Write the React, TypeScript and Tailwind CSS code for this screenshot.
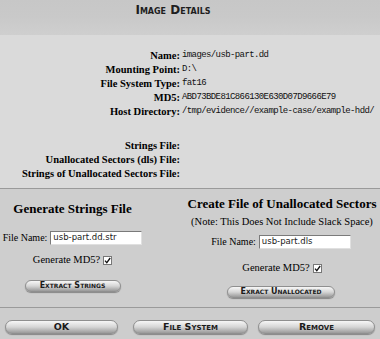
import React from "react";

const serif = "font-['Liberation_Serif','Times_New_Roman',serif]";
const mono = "font-['Liberation_Mono','Courier_New',monospace]";
const sans = "font-['DejaVu_Sans','Liberation_Sans',sans-serif]";

const details: [string, string][] = [
  ["Name:", "images/usb-part.dd"],
  ["Mounting Point:", "D:\\"],
  ["File System Type:", "fat16"],
  ["MD5:", "ABD73BDE81C866130E630D07D9666E79"],
  ["Host Directory:", "/tmp/evidence//example-case/example-hdd/"],
];

const files = ["Strings File:", "Unallocated Sectors (dls) File:", "Strings of Unallocated Sectors File:"];

const PillButton = ({ label, className }: { label: string; className: string }) => (
  <button
    className={`${className} ${sans} rounded-full border border-[#8f8f8f] bg-gradient-to-b from-[#f7f7f7] via-[#d6d6d6] to-[#9a9a9a] text-[#1a1a1a] font-bold [font-variant:small-caps] leading-none shadow-[0_1px_1px_rgba(0,0,0,0.35)] flex items-center justify-center`}
  >
    {label}
  </button>
);

const Row = ({ label, value }: { label: string; value?: string }) => (
  <div className="grid grid-cols-[181px_1fr] h-[14px] items-center">
    <span className={`${serif} font-bold text-[10.5px] text-right text-black pr-[1px]`}>{label}</span>
    <span className={`${mono} text-[9px] tracking-[-0.6px] whitespace-nowrap text-[#111] pl-[1px]`}>{value}</span>
  </div>
);

const TextBox = ({ value, width }: { value: string; width: string }) => (
  <div
    className={`${width} h-[14px] bg-white border border-t-[#7a7a7a] border-l-[#7a7a7a] border-r-[#e0e0e0] border-b-[#e0e0e0] ${sans} text-[8.5px] text-[#222] pl-[2px] flex items-center`}
  >
    {value}
  </div>
);

const Check = () => (
  <span className="w-[9px] h-[9px] bg-white border border-[#777] inline-flex items-center justify-center">
    <svg width="7" height="7" viewBox="0 0 7 7">
      <path d="M1 3.6 L2.8 5.6 L6.2 1" stroke="#111" strokeWidth="1.3" fill="none" />
    </svg>
  </span>
);

export default function App() {
  return (
    <div className="w-[380px] h-[339px] overflow-hidden bg-[#d9d9d9] flex flex-col">
      <div className="h-[35px] bg-gradient-to-b from-[#c7c7c7] via-[#c9c9c9] to-[#cfcfcf] flex justify-center">
        <h1 className={`${sans} font-bold text-[12px] [font-variant:small-caps] text-[#1e1e1e] mt-[1px] mr-[34px]`}>
          Image Details
        </h1>
      </div>

      <div className="h-[153px] pt-[13px] bg-[#dadada]">
        {details.map(([l, v]) => (
          <Row key={l} label={l} value={v} />
        ))}
        <div className="mt-[20px]">
          {files.map((l) => (
            <Row key={l} label={l} />
          ))}
        </div>
      </div>

      <div className="h-[1px] bg-[#9a9a9a]" />

      <div className={`h-[118px] bg-[#cecece] flex ${serif} text-black`}>
        <div className="w-[145px] flex flex-col items-center pt-[12px]">
          <h2 className="font-bold text-[13px] leading-[16px]">Generate Strings File</h2>
          <div className="mt-[13px] flex items-center gap-[3px] text-[10px]">
            <span>File Name:</span>
            <TextBox value="usb-part.dd.str" width="w-[92px]" />
          </div>
          <div className="mt-[9px] h-[12px] flex items-center gap-[3px] text-[10.5px]">
            <span>Generate MD5?</span>
            <Check />
          </div>
          <PillButton label="Extract Strings" className="mt-[14px] w-[96px] h-[12px] text-[8px]" />
        </div>
        <div className="ml-auto w-[196px] flex flex-col items-center pt-[7px]">
          <h2 className="font-bold text-[13px] leading-[16px] whitespace-nowrap">Create File of Unallocated Sectors</h2>
          <div className="mt-[4px] h-[12px] text-[10.5px] font-normal leading-[12px] whitespace-nowrap">
            (Note: This Does Not Include Slack Space)
          </div>
          <div className="mt-[6px] flex items-center gap-[3px] text-[10px] mr-[2px]">
            <span>File Name:</span>
            <TextBox value="usb-part.dls" width="w-[92px]" />
          </div>
          <div className="mt-[13px] h-[12px] flex items-center gap-[3px] text-[10.5px]">
            <span>Generate MD5?</span>
            <Check />
          </div>
          <PillButton label="Exract Unallocated" className="mt-[12px] w-[108px] h-[12px] text-[8px] mr-[2px]" />
        </div>
      </div>

      <div className="h-[1px] bg-[#9a9a9a]" />

      <div className="flex-1 bg-[#cdcdcd] flex items-start pt-[12px] pl-[5px]">
        <PillButton label="OK" className="w-[113px] h-[14px] text-[9.5px]" />
        <PillButton label="File System" className="ml-[15px] w-[115px] h-[14px] text-[9.5px]" />
        <PillButton label="Remove" className="ml-[10px] w-[117px] h-[14px] text-[9.5px]" />
      </div>
    </div>
  );
}
